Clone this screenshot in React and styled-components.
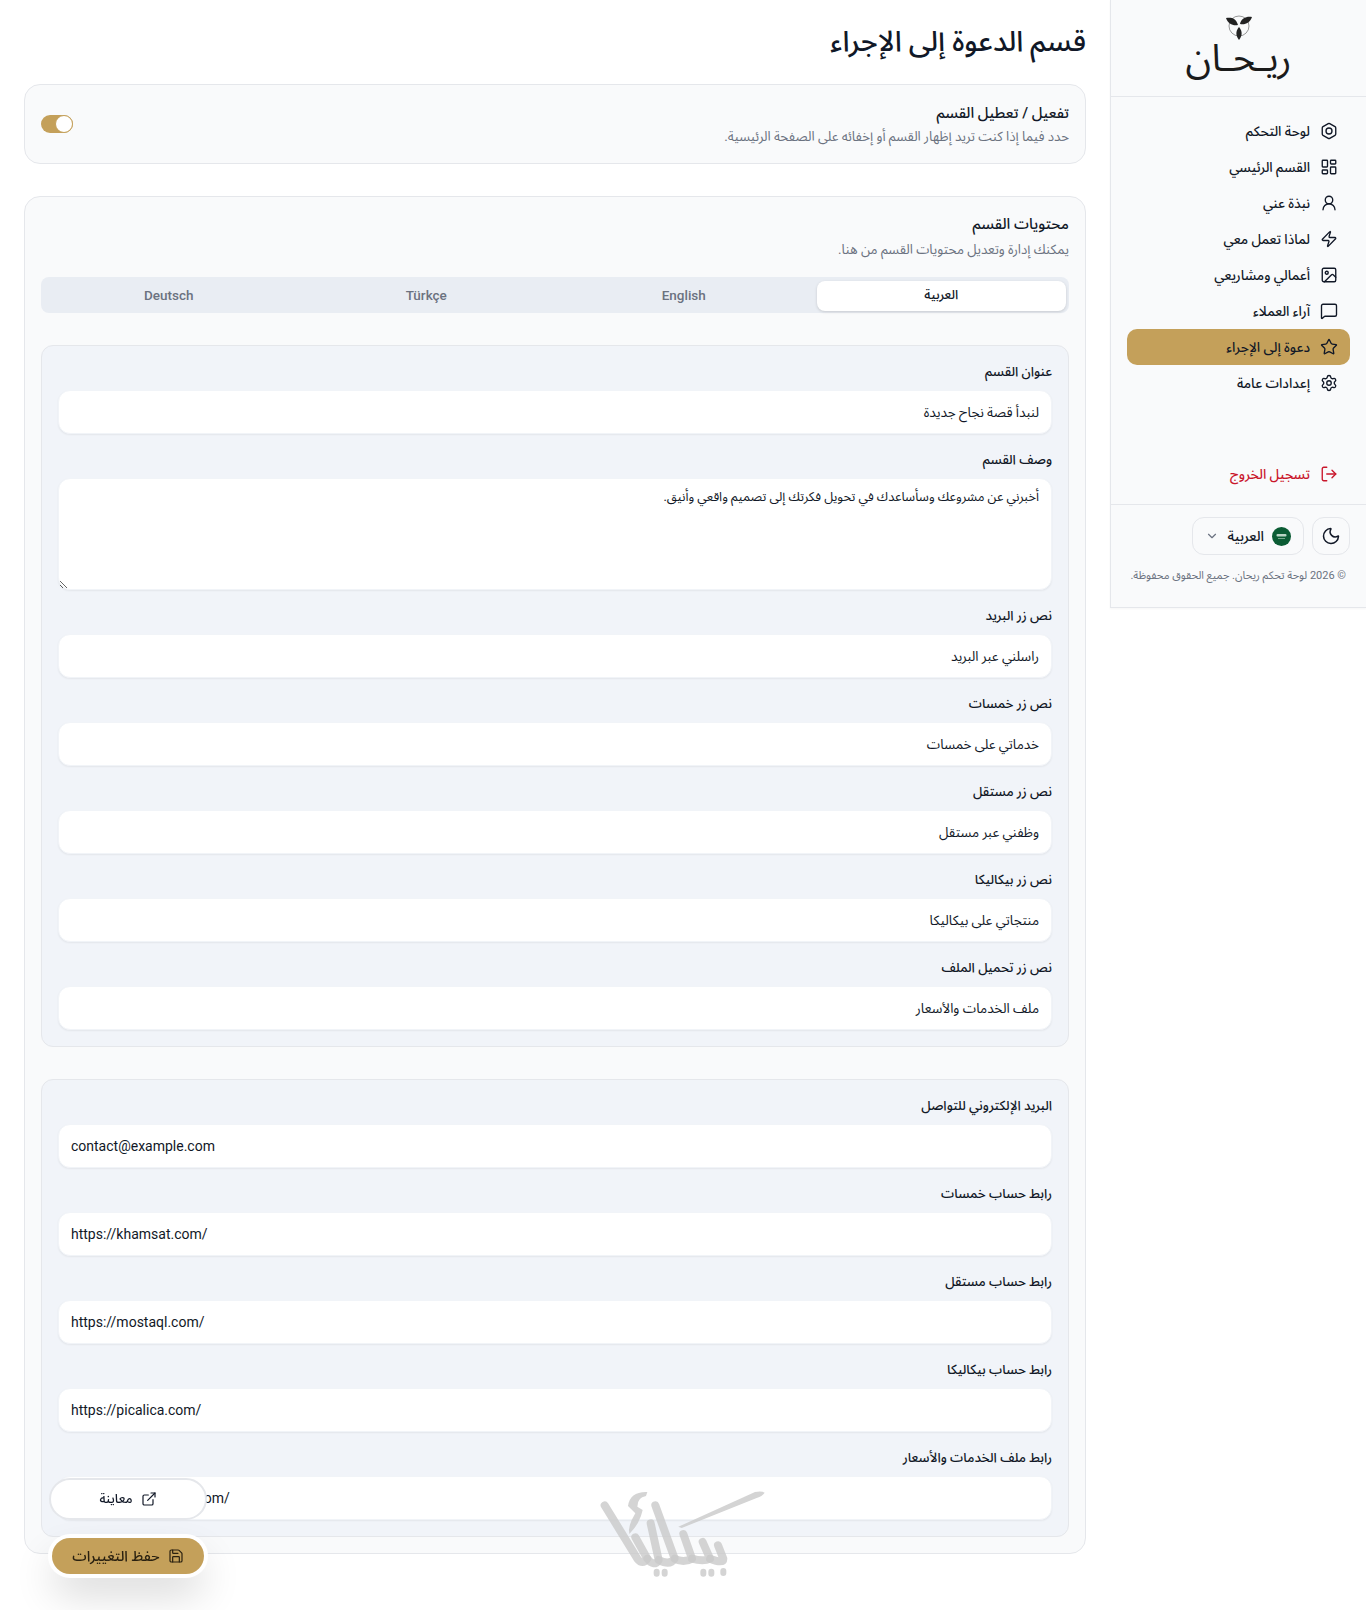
import React from 'react';
import styled, { createGlobalStyle } from 'styled-components';
import {
  LayoutDashboard, UserRound, Zap, Image, MessageSquare, Star, Settings,
  LogOut, Moon, ChevronDown, ExternalLink, Save,
} from 'lucide-react';

const gold = '#c4a05a';
const fontStack = 'Roboto, "Noto Sans Arabic", "DejaVu Sans", sans-serif';

const GlobalStyle = createGlobalStyle`
  html, body { margin: 0; padding: 0; background: #fff; }
  body { font-family: ${fontStack}; color: #111827; }
  * { box-sizing: border-box; }
`;

const Layout = styled.div`
  display: flex;
  align-items: flex-start;
  min-height: 1610px;
`;

const Sidebar = styled.aside`
  width: 256px;
  flex-shrink: 0;
  background: #f9fafb;
  border-left: 1px solid #e5e7eb;
  border-bottom: 1px solid #e5e7eb;
  box-shadow: 0 1px 2px rgba(0,0,0,.04);
`;

const Brand = styled.div`
  height: 97px;
  display: flex;
  flex-direction: column;
  align-items: center;
  border-bottom: 1px solid #e5e7eb;
  padding-top: 15px;
`;

const BrandName = styled.div`
  font-size: 38px;
  line-height: 34px;
  font-weight: 400;
  color: #1b1b1b;
`;

const Nav = styled.nav`
  padding: 16px 16px 12px;
  display: flex;
  flex-direction: column;
  border-bottom: 1px solid #e5e7eb;
`;

const NavItem = styled.a`
  height: 36px;
  padding: 0 12px;
  display: flex;
  align-items: center;
  gap: 10px;
  border-radius: 10px;
  font-size: 13.5px;
  font-weight: 500;
  color: ${p => p.$danger ? '#c9162b' : '#111827'};
  background: ${p => p.$active ? gold : 'transparent'};
  margin-top: ${p => p.$danger ? '55px' : '0'};
  svg { flex-shrink: 0; }
`;

const Controls = styled.div`
  display: flex;
  gap: 8px;
  padding: 12px 16px 0;
`;

const IconButton = styled.button`
  width: 38px;
  height: 38px;
  display: flex;
  align-items: center;
  justify-content: center;
  padding: 0;
  border: 1px solid #e5e7eb;
  border-radius: 12px;
  background: #f9fafb;
  color: #111827;
`;

const LangButton = styled.button`
  width: 112px;
  height: 38px;
  display: flex;
  align-items: center;
  gap: 8px;
  padding: 0 12px;
  border: 1px solid #e5e7eb;
  border-radius: 12px;
  background: #f9fafb;
  font-family: inherit;
  font-size: 14px;
  font-weight: 500;
  color: #111827;
  svg:last-child { margin-right: auto; color: #6b7280; }
`;

const Copyright = styled.p`
  margin: 0;
  padding: 13px 20px 23px 0;
  font-size: 11px;
  line-height: 16px;
  white-space: nowrap;
  color: #6b7280;
`;

const Main = styled.main`
  flex: 1;
  min-width: 0;
  padding: 24px;
`;

const PageTitle = styled.h1`
  margin: 0 0 24px;
  font-size: 28.5px;
  line-height: 36px;
  font-weight: 500;
  color: #111827;
`;

const Card = styled.section`
  background: #f9fafb;
  border: 1px solid #e5e7eb;
  border-radius: 16px;
  padding: 15px 16px 16px;
`;

const ToggleCard = styled(Card)`
  display: flex;
  align-items: center;
  justify-content: space-between;
  margin-bottom: 32px;
  height: 80px;
`;

const CardTitle = styled.h2`
  margin: 0 0 ${p => p.$gap}px;
  font-size: 15px;
  line-height: 24px;
  font-weight: 500;
  color: #111827;
`;

const CardHint = styled.p`
  margin: 0;
  font-size: 13.3px;
  line-height: 20px;
  color: #6b7280;
`;

const Toggle = styled.div`
  width: 32px;
  height: 18px;
  border-radius: 9px;
  background: ${gold};
  display: flex;
  justify-content: flex-end;
  direction: ltr;
`;

const Knob = styled.span`
  width: 18px;
  height: 18px;
  border-radius: 50%;
  background: #fff;
  border: 1px solid ${gold};
`;

const Tabs = styled.div`
  display: grid;
  grid-template-columns: repeat(4, 1fr);
  height: 36px;
  padding: 4px 3px;
  gap: 8px;
  margin: 17px 0 32px;
  border-radius: 8px;
  background: #e9edf3;
`;

const Tab = styled.button`
  border: 0;
  border-radius: 8px;
  padding: 0 0 2px;
  font-family: inherit;
  font-size: ${p => p.$active ? '13px' : '13.5px'};
  font-weight: 500;
  color: ${p => p.$active ? '#111827' : '#6b7280'};
  background: ${p => p.$active ? '#fff' : 'transparent'};
  box-shadow: ${p => p.$active ? '0 1px 3px rgba(0,0,0,.15)' : 'none'};
`;

const Panel = styled.div`
  background: #f1f4f9;
  border: 1px solid #e5e7eb;
  border-radius: 12px;
  padding: 16px;
  display: flex;
  flex-direction: column;
  gap: 16px;
  & + & { margin-top: 32px; }
`;

const Field = styled.label`
  display: flex;
  flex-direction: column;
  gap: 8px;
`;

const FieldLabel = styled.span`
  font-size: 13.2px;
  line-height: 20px;
  font-weight: 500;
  color: #111827;
`;

const inputStyles = `
  width: 100%;
  border: 1px solid #f1f4f8;
  border-radius: 12px;
  background: #fff;
  padding: 0 12px;
  font-family: ${fontStack};
  color: #111827;
  box-shadow: 0 1px 2px rgba(0,0,0,.06);
  outline: none;
`;

const TextInput = styled.input`
  ${inputStyles}
  height: 44px;
  font-size: ${p => p.dir === 'ltr' ? '14px' : '13.5px'};
  text-align: ${p => p.dir === 'ltr' ? 'left' : 'right'};
`;

const TextArea = styled.textarea`
  ${inputStyles}
  height: 112px;
  padding-top: 8px;
  font-size: 12.8px;
  line-height: 20px;
  display: block;
`;

const Floating = styled.div`
  position: fixed;
  left: 49px;
  bottom: 36px;
  width: 158px;
  display: flex;
  flex-direction: column;
  align-items: center;
  gap: 18px;
  z-index: 5;
`;

const PreviewButton = styled.button`
  width: 158px;
  height: 42px;
  border: 2px solid #e5e7eb;
  border-radius: 21px;
  background: #fff;
  display: flex;
  align-items: center;
  justify-content: center;
  gap: 8px;
  font-family: inherit;
  font-size: 13px;
  font-weight: 500;
  color: #111827;
`;

const SaveButton = styled.button`
  width: 152px;
  height: 36px;
  border: 0;
  border-radius: 18px;
  background: ${gold};
  display: flex;
  align-items: center;
  justify-content: center;
  gap: 8px;
  font-family: inherit;
  font-size: 14.5px;
  font-weight: 500;
  color: #2a2110;
  box-shadow: 0 0 0 4px #fff, 0 20px 40px rgba(0,0,0,.16);
`;

const Watermark = styled.svg`
  position: fixed;
  left: 560px;
  top: 1460px;
  width: 220px;
  height: 150px;
  pointer-events: none;
  z-index: 4;
`;

const iconProps = { size: 18, strokeWidth: 1.8 };

const NAV_ITEMS = [
  { label: 'لوحة التحكم', icon: <HexIcon /> },
  { label: 'القسم الرئيسي', icon: <LayoutDashboard {...iconProps} /> },
  { label: 'نبذة عني', icon: <UserRound {...iconProps} /> },
  { label: 'لماذا تعمل معي', icon: <Zap {...iconProps} /> },
  { label: 'أعمالي ومشاريعي', icon: <Image {...iconProps} /> },
  { label: 'آراء العملاء', icon: <MessageSquare {...iconProps} /> },
  { label: 'دعوة إلى الإجراء', icon: <Star {...iconProps} />, active: true },
  { label: 'إعدادات عامة', icon: <Settings {...iconProps} /> },
];

const TABS = ['العربية', 'English', 'Türkçe', 'Deutsch'];

const TEXT_FIELDS = [
  { label: 'عنوان القسم', value: 'لنبدأ قصة نجاح جديدة' },
  { label: 'وصف القسم', value: 'أخبرني عن مشروعك وسأساعدك في تحويل فكرتك إلى تصميم واقعي وأنيق.', multiline: true },
  { label: 'نص زر البريد', value: 'راسلني عبر البريد' },
  { label: 'نص زر خمسات', value: 'خدماتي على خمسات' },
  { label: 'نص زر مستقل', value: 'وظفني عبر مستقل' },
  { label: 'نص زر بيكاليكا', value: 'منتجاتي على بيكاليكا' },
  { label: 'نص زر تحميل الملف', value: 'ملف الخدمات والأسعار' },
];

const LINK_FIELDS = [
  { label: 'البريد الإلكتروني للتواصل', value: 'contact@example.com' },
  { label: 'رابط حساب خمسات', value: 'https://khamsat.com/' },
  { label: 'رابط حساب مستقل', value: 'https://mostaql.com/' },
  { label: 'رابط حساب بيكاليكا', value: 'https://picalica.com/' },
  { label: 'رابط ملف الخدمات والأسعار', value: 'https://drive.google.com/' },
];

function HexIcon() {
  return (
    <svg width="18" height="18" viewBox="0 0 24 24" fill="none" stroke="currentColor" strokeWidth="1.8">
      <path d="M21 16V8a2 2 0 0 0-1-1.73l-7-4a2 2 0 0 0-2 0l-7 4A2 2 0 0 0 3 8v8a2 2 0 0 0 1 1.73l7 4a2 2 0 0 0 2 0l7-4A2 2 0 0 0 21 16z" />
      <circle cx="12" cy="12" r="4" />
    </svg>
  );
}

function LeafLogo() {
  return (
    <svg width="28" height="26" viewBox="0 0 28 26">
      <circle cx="14" cy="11" r="10" fill="none" stroke="#555" strokeWidth="0.6" />
      <path d="M1 3c5-1 10 0 12 7-5 1-10-1-12-7z" fill="#222" />
      <path d="M27 2c-5-1-11 1-12 7 5 1 10-1 12-7z" fill="#222" />
      <path d="M14 25c-3-4-4-8 0-13 4 5 3 9 0 13z" fill="#222" />
    </svg>
  );
}

function SaudiFlag() {
  return (
    <svg width="19" height="19" viewBox="0 0 19 19">
      <circle cx="9.5" cy="9.5" r="9.5" fill="#0b5c34" />
      <rect x="4.5" y="7" width="10" height="2.6" rx="1" fill="#b9d5c4" />
      <rect x="6" y="11" width="7" height="0.8" fill="#8fbaa0" />
    </svg>
  );
}

function FormField({ label, value, multiline, dir }) {
  return (
    <Field>
      <FieldLabel>{label}</FieldLabel>
      {multiline
        ? <TextArea defaultValue={value} />
        : <TextInput defaultValue={value} dir={dir} />}
    </Field>
  );
}

export default function App() {
  return (
    <>
      <GlobalStyle />
      <Layout dir="rtl">
        <Sidebar>
          <Brand>
            <LeafLogo />
            <BrandName>ريـحـان</BrandName>
          </Brand>
          <Nav>
            {NAV_ITEMS.map(item => (
              <NavItem key={item.label} $active={item.active}>
                {item.icon}
                {item.label}
              </NavItem>
            ))}
            <NavItem $danger>
              <LogOut {...iconProps} />
              تسجيل الخروج
            </NavItem>
          </Nav>
          <Controls>
            <IconButton><Moon size={20} strokeWidth={1.8} /></IconButton>
            <LangButton>
              <SaudiFlag />
              العربية
              <ChevronDown size={14} />
            </LangButton>
          </Controls>
          <Copyright>© 2026 لوحة تحكم ريحان. جميع الحقوق محفوظة.</Copyright>
        </Sidebar>

        <Main>
          <PageTitle>قسم الدعوة إلى الإجراء</PageTitle>

          <ToggleCard>
            <div>
              <CardTitle $gap={2}>تفعيل / تعطيل القسم</CardTitle>
              <CardHint>حدد فيما إذا كنت تريد إظهار القسم أو إخفائه على الصفحة الرئيسية.</CardHint>
            </div>
            <Toggle><Knob /></Toggle>
          </ToggleCard>

          <Card>
            <CardTitle $gap={4}>محتويات القسم</CardTitle>
            <CardHint>يمكنك إدارة وتعديل محتويات القسم من هنا.</CardHint>
            <Tabs>
              {TABS.map((tab, i) => <Tab key={tab} $active={i === 0}>{tab}</Tab>)}
            </Tabs>
            <Panel>
              {TEXT_FIELDS.map(field => <FormField key={field.label} {...field} />)}
            </Panel>
            <Panel>
              {LINK_FIELDS.map(field => <FormField key={field.label} {...field} dir="ltr" />)}
            </Panel>
          </Card>
        </Main>
      </Layout>

      <Floating>
        <PreviewButton dir="rtl"><ExternalLink size={16} strokeWidth={1.8} />معاينة</PreviewButton>
        <SaveButton dir="rtl"><Save size={16} strokeWidth={1.8} />حفظ التغييرات</SaveButton>
      </Floating>

      <Watermark viewBox="0 0 660 450" fill="none" stroke="#c9c9c9" strokeOpacity="0.8" strokeWidth="24" strokeLinecap="round" strokeLinejoin="round">
        <path d="M134 136 L232 296 Q248 316 262 296 L226 232" />
        <path d="M262 296 Q282 322 296 300 L272 190" />
        <path d="M296 300 Q330 318 344 296 L286 136" />
        <path d="M344 296 Q370 310 396 296 L370 222" />
        <path d="M396 296 Q430 306 450 296 L428 246" />
        <path d="M450 296 Q490 312 490 296 L474 256" />
        <path d="M204 138 Q210 94 262 96 L258 108 Q232 112 232 140 L248 150 Q240 190 208 222 Q202 200 226 160 Z" fill="#c9c9c9" fillOpacity="0.8" stroke="none" />
        <path d="M355 200 L585 96 Q605 92 614 98 Q608 108 590 114 L365 204 Z" fill="#c9c9c9" fillOpacity="0.8" stroke="none" />
        <path d="M290 335v6M314 335v6M430 335v6M454 335v6M490 333v6" strokeWidth="18" />
      </Watermark>
    </>
  );
}
